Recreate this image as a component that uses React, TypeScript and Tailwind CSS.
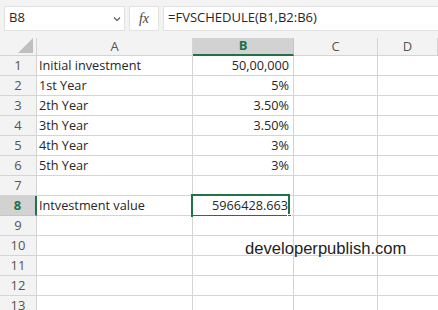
import React from "react";

const cols = [
  { key: "A", w: "w-[156px]" },
  { key: "B", w: "w-[101px]" },
  { key: "C", w: "w-[84px]" },
  { key: "D", w: "flex-1" },
];

const rows: { a: string; b: string }[] = [
  { a: "Initial investment", b: "50,00,000" },
  { a: "1st Year", b: "5%" },
  { a: "2th Year", b: "3.50%" },
  { a: "3th Year", b: "3.50%" },
  { a: "4th Year", b: "3%" },
  { a: "5th Year", b: "3%" },
  { a: "", b: "" },
  { a: "Intvestment value", b: "5966428.663" },
  { a: "", b: "" },
  { a: "", b: "" },
  { a: "", b: "" },
  { a: "", b: "" },
  { a: "", b: "" },
];

const font = "font-['Open_Sans','Noto_Sans',sans-serif]";

export default function App() {
  return (
    <div className={`relative w-[438px] h-[310px] overflow-hidden bg-[#f3f3f3] ${font} text-[#262626]`}>
      {/* formula bar */}
      <div className="flex items-center h-[38px] pt-[5px] pb-[7px] pl-[4px] gap-[4px]">
        <div className="w-[121px] h-[25px] bg-white border border-[#e1e1e1] flex items-center justify-between pl-[4px] pr-[3px] text-[13px]">
          <span>B8</span>
          <svg width="8" height="6" viewBox="0 0 8 6" className="mt-[1px]">
            <path d="M1 1.5 L4 4.5 L7 1.5" fill="none" stroke="#555" strokeWidth="1.1" />
          </svg>
        </div>
        <div className="w-[30px] h-[25px] bg-white border border-[#e1e1e1] flex items-center justify-center text-[14px] italic font-['Liberation_Serif',serif] text-[#444]">
          fx
        </div>
        <div className="flex-1 h-[25px] bg-white border border-[#e1e1e1] border-r-0 flex items-center pl-[4px] text-[13px]">
          =FVSCHEDULE(B1,B2:B6)
        </div>
      </div>

      {/* column headers */}
      <div className="flex h-[18px] text-[13px] text-[#555]">
        <div className="w-[37px] border-r border-b border-[#d4d4d4] relative">
          <svg width="15" height="15" viewBox="0 0 15 15" className="absolute right-[3px] bottom-[2px]">
            <polygon points="15,0 15,15 0,15" fill="#bfbfbf" />
          </svg>
        </div>
        {cols.map((c) =>
          c.key === "B" ? (
            <div
              key={c.key}
              className={`${c.w} bg-[#d2d2d2] border-r border-[#c6c6c6] border-b-2 border-b-[#217346] flex items-center justify-center font-bold text-[#217346]`}
            >
              {c.key}
            </div>
          ) : (
            <div
              key={c.key}
              className={`${c.w} border-r border-b border-[#d4d4d4] flex items-center justify-center`}
            >
              {c.key}
            </div>
          )
        )}
      </div>

      {/* rows */}
      {rows.map((r, i) => {
        const sel = i === 7;
        return (
          <div key={i} className="flex h-[20px] text-[12.7px] leading-[19px]">
            <div
              className={`w-[37px] border-b flex items-end justify-center text-[13px] ${
                sel
                  ? "bg-[#d2d2d2] border-b-[#c6c6c6] border-r-2 border-r-[#217346] font-bold text-[#217346]"
                  : "border-r border-[#d4d4d4] text-[#555]"
              }`}
            >
              {i + 1}
            </div>
            <div className="w-[156px] bg-white border-r border-b border-[#d4d4d4] flex items-end pl-[2px] whitespace-nowrap">
              {r.a}
            </div>
            <div
              className={`w-[101px] bg-white border-r border-b border-[#d4d4d4] flex items-end justify-end relative ${
                sel ? "pr-[5px]" : "pr-[4px]"
              }`}
            >
              {r.b}
              {sel && (
                <div className="absolute left-[-2px] top-[-2px] w-[99px] h-[23px] border-2 border-[#217346]">
                  <div className="absolute right-[-4px] bottom-[-4px] w-[5px] h-[5px] bg-[#217346] border border-white" />
                </div>
              )}
            </div>
            <div className="w-[84px] bg-white border-r border-b border-[#d4d4d4]" />
            <div className="flex-1 bg-white border-b border-[#d4d4d4]" />
          </div>
        );
      })}

      <div className="absolute left-[245px] top-[239px] text-[16.6px] leading-[20px] font-['Liberation_Sans',Arial,sans-serif] text-[#222]">
        developerpublish.com
      </div>
    </div>
  );
}
